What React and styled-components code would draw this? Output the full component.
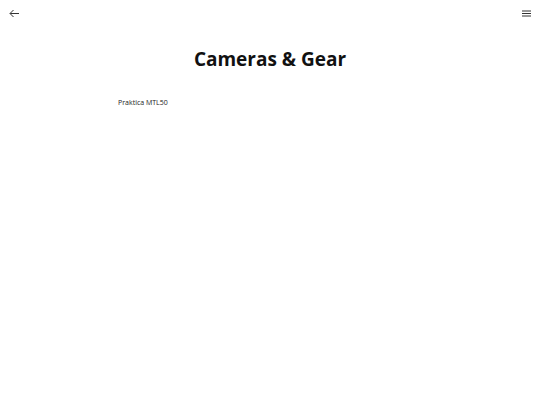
import React from "react";
import styled, { createGlobalStyle } from "styled-components";

const Global = createGlobalStyle`
  html, body { margin: 0; padding: 0; background: #fff; }
  body { font-family: "Open Sans", sans-serif; color: #111; }
`;

const Page = styled.div`
  width: 540px;
  height: 405px;
  display: flex;
  flex-direction: column;
`;

const TopBar = styled.header`
  display: flex;
  justify-content: space-between;
  align-items: center;
  height: 26px;
  padding: 0 8px 0 8px;
`;

const IconButton = styled.button`
  border: 0;
  background: none;
  padding: 0;
  width: 12px;
  height: 12px;
  display: flex;
  align-items: center;
  justify-content: center;
  color: #333;
  cursor: pointer;
`;

const Title = styled.h1`
  margin: 20px 0 0;
  text-align: center;
  font-size: 19px;
  font-weight: 700;
  line-height: 26px;
  color: #111;
`;

const List = styled.ul`
  list-style: none;
  margin: 26px 0 0;
  padding: 0 0 0 118px;
`;

const Item = styled.li`
  font-size: 7px;
  line-height: 10px;
  color: #222;
`;

export default function App() {
  return (
    <Page>
      <Global />
      <TopBar>
        <IconButton aria-label="Back">
          <svg width="11" height="9" viewBox="0 0 11 9" fill="none" stroke="currentColor" strokeWidth="1">
            <path d="M10 4.5H1.2M4.5 1L1 4.5L4.5 8" />
          </svg>
        </IconButton>
        <IconButton aria-label="Menu">
          <svg width="9" height="7" viewBox="0 0 9 7" fill="none" stroke="currentColor" strokeWidth="1">
            <path d="M0 1H9M0 3.5H9M0 6H9" />
          </svg>
        </IconButton>
      </TopBar>
      <Title>Cameras &amp; Gear</Title>
      <List>
        <Item>Praktica MTL50</Item>
      </List>
    </Page>
  );
}
